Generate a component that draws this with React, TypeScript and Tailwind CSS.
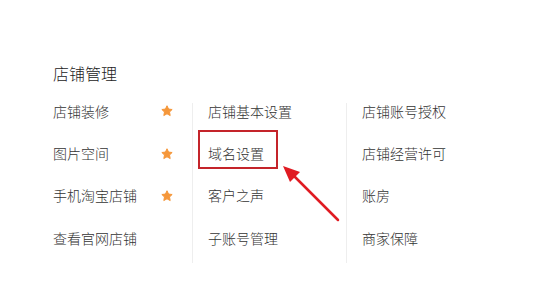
import React from 'react';

const columns: { label: string; star?: boolean; boxed?: boolean }[][] = [
  [
    { label: '店铺装修', star: true },
    { label: '图片空间', star: true },
    { label: '手机淘宝店铺', star: true },
    { label: '查看官网店铺' },
  ],
  [
    { label: '店铺基本设置' },
    { label: '域名设置', boxed: true },
    { label: '客户之声' },
    { label: '子账号管理' },
  ],
  [
    { label: '店铺账号授权' },
    { label: '店铺经营许可' },
    { label: '账房' },
    { label: '商家保障' },
  ],
];

function Star() {
  return (
    <svg width="12" height="12" viewBox="0 0 24 24">
      <path
        d="M12 1.5l3.1 6.6 7.2.9-5.3 5 1.4 7.1L12 17.6l-6.4 3.5 1.4-7.1-5.3-5 7.2-.9z"
        fill="#f5973a"
        stroke="#f5973a"
        strokeWidth="2"
        strokeLinejoin="round"
      />
    </svg>
  );
}

export default function App() {
  return (
    <div
      className="relative w-[543px] h-[307px] bg-white text-[#333] overflow-hidden font-light"
      style={{ fontFamily: '"Microsoft YaHei", "Noto Sans CJK SC", sans-serif' }}
    >
      <div className="pl-[53px] pt-[61px]">
        <h2 className="text-[16px] leading-[24px] text-[#222]">店铺管理</h2>
      </div>

      {/* 菜单列 */}
      <div className="flex pl-[38px] mt-[5px]">
        {columns.map((col, ci) => (
          <React.Fragment key={ci}>
            {ci > 0 && <div className="w-px h-[160px] mt-[13px] bg-[#eeeeee]" />}
            <div className={`${ci === 0 ? 'w-[154px]' : 'w-[153px]'} pl-[15px]`}>
              {col.map((item) => (
                <div key={item.label} className="relative h-[42.4px] flex items-center text-[14px] pr-[19px]">
                  <span className="flex-1">{item.label}</span>
                  {item.star && <Star />}
                  {item.boxed && (
                    <div className="absolute left-[-10px] top-[-2px] w-[80px] h-[39px] border-2 border-[#c4242a]" />
                  )}
                </div>
              ))}
            </div>
          </React.Fragment>
        ))}
      </div>

      {/* 标注箭头 */}
      <svg className="absolute left-0 top-0" width="543" height="307">
        <line x1="338" y1="220" x2="292" y2="174" stroke="#e01b22" strokeWidth="2.5" strokeLinecap="round" />
        <polygon points="283,166 300,172 290,182" fill="#e01b22" />
      </svg>
    </div>
  );
}
